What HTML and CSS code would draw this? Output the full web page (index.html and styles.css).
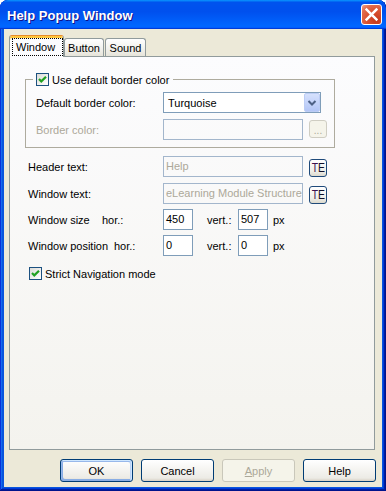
FILE: index.html
```html
<!DOCTYPE html>
<html>
<head>
<meta charset="utf-8">
<title>Help Popup Window</title>
<link rel="stylesheet" href="styles.css">
</head>
<body>
<div class="window">
  <div class="titlebar">
    <span class="title">Help Popup Window</span>
    <div class="close"><svg width="19" height="19" viewBox="0 0 19 19"><path d="M4.6 4.6 L14.4 14.4 M14.4 4.6 L4.6 14.4" stroke="#fff" stroke-width="2.5" stroke-linecap="square"/></svg></div>
  </div>
  <div class="client">
    <div class="tabs">
      <div class="tab sel"><span class="focus">Window</span></div>
      <div class="tab t-button">Button</div>
      <div class="tab t-sound">Sound</div>
    </div>
    <div class="panel">
      <fieldset class="group">
        <legend class="legend">
          <span class="check"><svg width="11" height="11" viewBox="0 0 11 11"><path d="M2 5 L4.3 7.4 L9 2.7" fill="none" stroke="#21A121" stroke-width="2.2"/></svg></span>
          <span>Use default border color</span>
        </legend>
        <div class="grid">
          <span class="lbl">Default border color:</span>
          <div class="select"><span class="sel-text">Turquoise</span><span class="drop"><svg width="14" height="17" viewBox="0 0 14 17"><path d="M3.5 7 L7 10.5 L10.5 7" fill="none" stroke="#4D6185" stroke-width="2"/></svg></span></div>
          <span class="lbl dis">Border color:</span>
          <div class="pair"><div class="input w140 off"></div><div class="dots">...</div></div>
        </div>
      </fieldset>

      <div class="row first">
        <span class="lead">Header text:</span>
        <div class="input w140 off">Help</div>
        <div class="te"><span class="te-in"><span class="te-t">T</span><span class="te-e">E</span></span></div>
      </div>
      <div class="row r-text">
        <span class="lead">Window text:</span>
        <div class="input w140 off">eLearning Module Structure</div>
        <div class="te"><span class="te-in"><span class="te-t">T</span><span class="te-e">E</span></span></div>
      </div>
      <div class="row r-num">
        <span class="lead"><span class="name-size">Window size</span>hor.:</span>
        <div class="input num">450</div>
        <span class="vert">vert.:</span>
        <div class="input num">507</div>
        <span class="px">px</span>
      </div>
      <div class="row r-num">
        <span class="lead"><span class="name-pos">Window position</span>hor.:</span>
        <div class="input num">0</div>
        <span class="vert">vert.:</span>
        <div class="input num">0</div>
        <span class="px">px</span>
      </div>
      <div class="chkrow">
        <span class="check"><svg width="11" height="11" viewBox="0 0 11 11"><path d="M2 5 L4.3 7.4 L9 2.7" fill="none" stroke="#21A121" stroke-width="2.2"/></svg></span>
        <span>Strict Navigation mode</span>
      </div>
    </div>
    <div class="buttons">
      <div class="btn default">OK</div>
      <div class="btn">Cancel</div>
      <div class="btn disabled"><span class="ul">A</span>pply</div>
      <div class="btn">Help</div>
    </div>
  </div>
</div>
</body>
</html>
```

FILE: styles.css
```css
* { box-sizing: border-box; }
html, body { margin: 0; padding: 0; background: #fff; }
body {
  font-family: "Liberation Sans", Arial, sans-serif;
  font-size: 11px;
  color: #000;
}

.window {
  width: 386px;
  height: 491px;
  display: flex;
  flex-direction: column;
  border-radius: 8px 8px 0 0;
  background: #0855dd;
  box-shadow: inset -1px -1px #00138c, inset 1px 1px #0831d9,
              inset -2px -2px #001ea0, inset 2px 2px #166aee,
              inset -3px -3px #003bda, inset 3px 3px #0855dd;
  overflow: hidden;
}

.titlebar {
  flex: none;
  height: 29px;
  display: flex;
  align-items: center;
  justify-content: space-between;
  padding: 0 4px 0 7px;
  border-radius: 8px 8px 0 0;
  background: linear-gradient(180deg, #0997ff, #0053ee 8%, #0050ee 40%, #0066ff 88%, #0066ff 93%, #005bff 95%, #003dd7 96%, #003dd7);
}
.title {
  color: #fff;
  font-weight: bold;
  font-size: 13px;
  text-shadow: 1px 1px #0f1089;
  padding-top: 1px;
}
.close {
  width: 21px;
  height: 21px;
  border: 1px solid #fff;
  border-radius: 3px;
  display: flex;
  align-items: center;
  justify-content: center;
  background: radial-gradient(circle at 75% 80%, #c5381a 0%, #da5230 45%, #e26d4d 75%, #efa38c 100%);
}
.close svg { display: block; }

.client {
  flex: 1;
  margin: 0 4px 4px;
  background: #ece9d8;
  padding: 6px 6px 5px 5px;
  display: flex;
  flex-direction: column;
}

/* tabs */
.tabs {
  display: flex;
  align-items: flex-end;
  height: 21px;
  position: relative;
  z-index: 1;
}
.tab {
  height: 18px;
  border: 1px solid #919b9c;
  border-bottom: none;
  border-radius: 3px 3px 0 0;
  background: linear-gradient(180deg, #ffffff, #f3f3ef 50%, #e6e4da);
  display: flex;
  align-items: center;
  justify-content: center;
  padding-top: 1px;
}
.tab.sel {
  width: 55px;
  height: 22px;
  margin-bottom: -1px;
  border-top: 1px solid #e68b2c;
  box-shadow: inset 0 2px #ffc73c;
  background: #fcfcfe;
  align-items: flex-start;
  justify-content: flex-start;
  padding: 2px 0 0 2px;
}
.focus {
  display: block;
  width: 51px;
  height: 18px;
  border: 1px dotted #000;
  padding-left: 3px;
  line-height: 16px;
}
.t-button { width: 40px; }
.t-sound { width: 41px; margin-left: 1px; }

/* panel */
.panel {
  width: 366px;
  height: 394px;
  border: 1px solid #919b9c;
  background: linear-gradient(180deg, #fcfcfe, #f4f3ee);
  padding: 15px 0 0 15px;
}

.group {
  width: 310px;
  margin: 0;
  border: 1px solid #aeab9e;
  padding: 5px 0 7px 10px;
  min-inline-size: 0;
}
.legend {
  display: flex;
  align-items: center;
  height: 15px;
  margin-left: -3px;
  padding: 0 4px 0 3px;
  gap: 3px;
}
.check {
  width: 13px;
  height: 13px;
  flex: none;
  border: 1px solid #1c5180;
  background: linear-gradient(135deg, #dcdcd7, #ffffff);
  display: flex;
}
.check svg { display: block; }

.grid {
  display: grid;
  grid-template-columns: 127px auto;
  grid-auto-rows: 21px;
  row-gap: 6px;
  align-items: center;
}
.lbl.dis { color: #aca899; }

.select {
  width: 158px;
  height: 21px;
  border: 1px solid #7f9db9;
  background: #fff;
  display: flex;
  align-items: center;
  padding-left: 4px;
}
.sel-text { flex: 1; }
.drop {
  width: 16px;
  height: 19px;
  border: 1px solid #bccdf5;
  border-radius: 2px;
  background: linear-gradient(180deg, #d6e1fd, #b3c6f6);
  display: flex;
  align-items: center;
  justify-content: center;
}
.drop svg { display: block; }

.pair { display: flex; align-items: center; gap: 6px; }

.input {
  height: 21px;
  border: 1px solid #7f9db9;
  background: #fff;
  padding: 0 2px;
  line-height: 19px;
  white-space: nowrap;
  overflow: hidden;
}
.input.off {
  border-color: #a3b6cc;
  background: transparent;
  color: #aca899;
}
.w140 { width: 140px; }
.num { width: 30px; }

.dots {
  width: 18px;
  height: 18px;
  border: 1px solid #cfcdc2;
  border-radius: 3px;
  background: #f5f4ea;
  color: #aca899;
  text-align: center;
  line-height: 19px;
  font-size: 10px;
  margin-top: -2px;
}

.row {
  display: flex;
  align-items: center;
  height: 21px;
  padding-left: 3px;
}
.row.first { margin-top: 8px; }
.row.r-text { margin-top: 6px; }
.row.r-num { margin-top: 5px; }
.lead { width: 135px; flex: none; white-space: nowrap; }
.name-size { display: inline-block; width: 74px; }
.name-pos { display: inline-block; width: 86px; }
.vert { width: 31px; margin-left: 14px; }
.px { margin-left: 5px; }

.te {
  width: 18px;
  height: 18px;
  margin-left: 6px;
  margin-top: 2px;
  border: 1px solid #1f4a7a;
  border-radius: 3px;
  background: linear-gradient(180deg, #ffffff, #efeee8 70%, #dcd9cd);
  display: flex;
  align-items: center;
  justify-content: center;
  overflow: hidden;
}
.te-in {
  display: inline-block;
  font-size: 13px;
  line-height: 16px;
  transform: scaleX(0.8);
  white-space: nowrap;
}
.te-t { color: #3c1050; }
.te-e { color: #10102a; }

.chkrow {
  display: flex;
  align-items: center;
  gap: 3px;
  margin-top: 11px;
  padding-left: 4px;
  height: 13px;
}

/* buttons */
.buttons {
  display: flex;
  justify-content: flex-end;
  gap: 8px;
  margin-top: 9px;
}
.btn {
  width: 73px;
  height: 23px;
  border: 1px solid #003c74;
  border-radius: 3px;
  background: linear-gradient(180deg, #ffffff, #ecebe5 86%, #d8d0c4);
  display: flex;
  align-items: center;
  justify-content: center;
  padding-top: 1px;
}
.btn.default {
  box-shadow: inset -1px 1px #cee7ff, inset 1px 2px #98b8ea, inset -2px 2px #bcd4f6, inset 1px -1px #89ade4, inset 2px -2px #89ade4;
}
.btn.disabled {
  border-color: #c9c7ba;
  background: #f5f4ea;
  color: #aca899;
}
.ul { text-decoration: underline; }
```
